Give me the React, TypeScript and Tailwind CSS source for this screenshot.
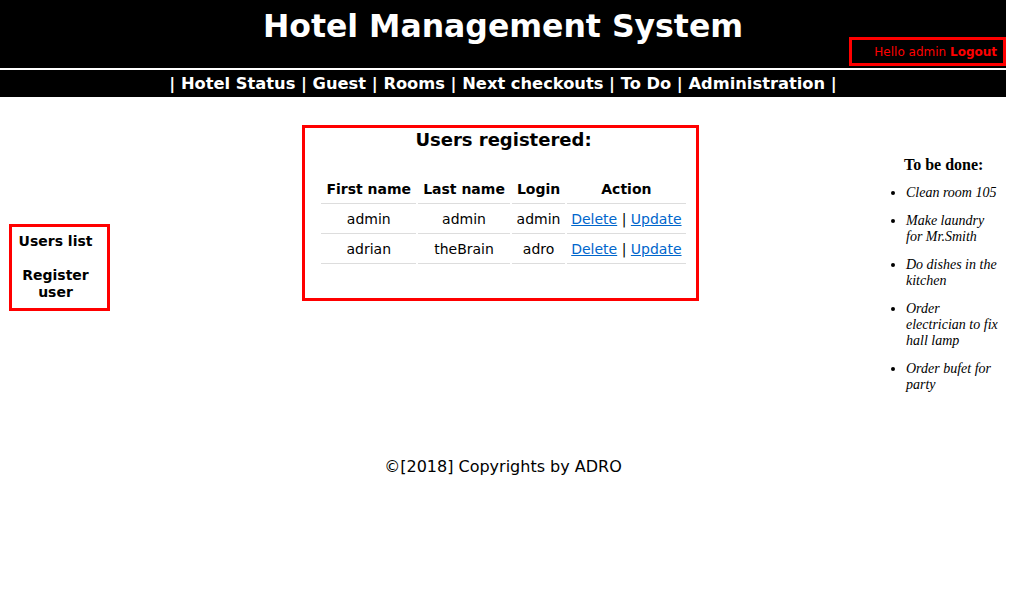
import React from "react";

const sans = "font-['Verdana','DejaVu_Sans',sans-serif]";
const serif = "font-['Georgia','Liberation_Serif',serif]";

export default function App() {
  const users = [
    { first: "admin", last: "admin", login: "admin" },
    { first: "adrian", last: "theBrain", login: "adro" },
  ];
  const todos = [
    "Clean room 105",
    "Make laundry for Mr.Smith",
    "Do dishes in the kitchen",
    "Order electrician to fix hall lamp",
    "Order bufet for party",
  ];
  const cell = "border-b border-[#dddddd] px-[4px] whitespace-nowrap text-center";
  return (
    <div className={`${sans} w-[1034px] h-[601px] bg-white text-black relative`}>
      <header className="w-[1006px]">
        <div className="bg-black h-[68px] relative">
          <h1 className="text-white font-bold text-[31.5px] leading-none text-center pt-[11px]">
            Hotel Management System
          </h1>
          <div className="absolute right-0 top-[37px] w-[157px] h-[29px] border-[3px] border-[#ff0000] flex items-center justify-end pr-[6px] text-[12px] text-[#ff0000]">
            Hello admin&nbsp;<b>Logout</b>
          </div>
        </div>
        <div className="h-[2px] bg-white" />
        <nav className="bg-black h-[27px] text-white font-bold text-[16.3px] leading-[27px] text-center">
          | Hotel Status | Guest | Rooms | Next checkouts | To Do | Administration |
        </nav>
      </header>

      <div className="flex items-start">
        <div className="ml-[9px] mt-[127px] w-[101px] h-[87px] border-[3px] border-[#ff0000] font-bold text-[14px] text-center pt-[6px] pr-[8px] leading-[17px]">
          <div>Users list</div>
          <div className="mt-[17px] px-[8px]">Register user</div>
        </div>

        <div className="ml-[192px] mt-[28px] w-[397px] h-[176px] border-[3px] border-[#ff0000] flex flex-col items-center">
          <h2 className="font-bold text-[18px] leading-[22px] mt-[1px] ml-[6px]">Users registered:</h2>
          <table className="mt-[23px] border-separate border-spacing-[2px] text-[14px] ml-[6px]">
            <thead>
              <tr>
                <th className={`${cell} pb-[3px] pt-[3px] px-[5px] font-bold`}>First name</th>
                <th className={`${cell} pb-[3px] pt-[3px] px-[5px] font-bold`}>Last name</th>
                <th className={`${cell} pb-[3px] pt-[3px] px-[5px] font-bold`}>Login</th>
                <th className={`${cell} pb-[3px] pt-[3px] font-bold px-[8px]`}>Action</th>
              </tr>
            </thead>
            <tbody>
              {users.map((u) => (
                <tr key={u.login}>
                  <td className={`${cell} py-[3px]`}>{u.first}</td>
                  <td className={`${cell} py-[3px]`}>{u.last}</td>
                  <td className={`${cell} py-[3px]`}>{u.login}</td>
                  <td className={`${cell} py-[3px]`}>
                    <a href="#" className="text-[#0066cc] underline">Delete</a> |{" "}
                    <a href="#" className="text-[#0066cc] underline">Update</a>
                  </td>
                </tr>
              ))}
            </tbody>
          </table>
        </div>

        <div className={`${serif} ml-[191px] mt-[59px] w-[110px]`}>
          <div className="font-bold text-[16px] leading-[18px] pl-[14px]">To be done:</div>
          <ul className="list-disc pl-[16px] mt-[11px] text-[14px] italic leading-[16px]">
            {todos.map((t) => (
              <li key={t} className="mb-[12px] w-[93px]">{t}</li>
            ))}
          </ul>
        </div>
      </div>

      <footer className="absolute left-0 w-[1006px] top-[457px] text-center text-[16px] leading-[20px]">
        ©[2018] Copyrights by ADRO
      </footer>
    </div>
  );
}
